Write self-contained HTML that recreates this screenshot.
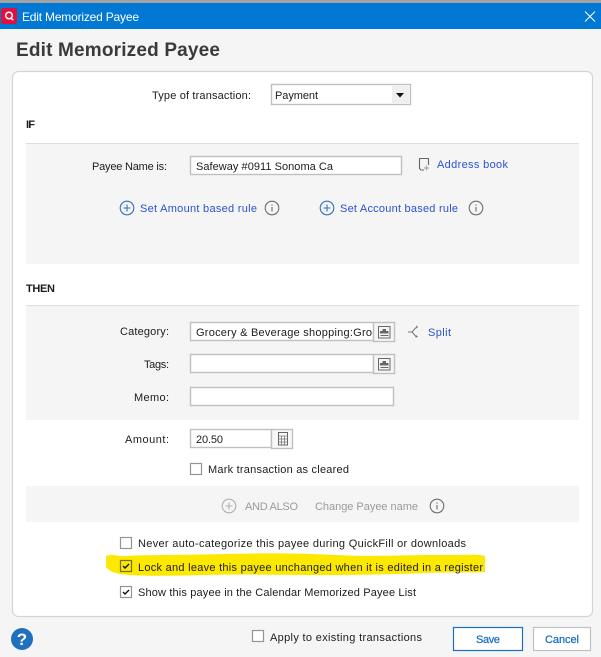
<!DOCTYPE html>
<html><head><meta charset="utf-8"><title>Edit Memorized Payee</title>
<style>
html,body{margin:0;padding:0;background:#f5f5f5;width:601px;height:657px;overflow:hidden}
svg{display:block}
text{font-family:"Liberation Sans",sans-serif;font-size:11px;fill:#1c1c1c}
.l{fill:#2a52d0}
.g{fill:#9a9a9a}
.b{font-weight:bold}
.box{fill:#fff;stroke:#c0c0c0;stroke-width:1.4}
.cb{fill:#fff;stroke:#959595;stroke-width:1.2}
.ck{fill:none;stroke:#111;stroke-width:1.4}
.ci{fill:none;stroke:#2f72bf;stroke-width:1.1}
.cg{fill:none;stroke:#b0b0b0;stroke-width:1.1}
.ii{fill:none;stroke:#6e6e6e;stroke-width:1.1}
.bt{fill:#1b6fbf;font-size:11px;stroke:#1b6fbf;stroke-width:.25}
</style></head><body>
<svg width="601" height="657" viewBox="0 0 601 657" xmlns="http://www.w3.org/2000/svg">
<rect width="601" height="657" fill="#f5f5f5"/>
<rect width="601" height="3" fill="#a3a3a3"/>
<rect y="3" width="601" height="26" fill="#0178d4"/>
<rect x="1" y="8" width="16" height="16" rx="2.500" fill="#e2103e"/>
<circle cx="9" cy="15.500" r="3.300" fill="none" stroke="#fff" stroke-width="1.500"/>
<path d="M10.500 18l2.800 2" stroke="#fff" stroke-width="1.500"/>
<text x="22" y="21" textLength="117" lengthAdjust="spacing" style="fill:#fff;font-size:12px">Edit Memorized Payee</text>
<path d="M585 11.500l10 10M595 11.500l-10 10" stroke="#fff" stroke-width="1" fill="none"/>
<text x="16" y="56" textLength="204" lengthAdjust="spacing" class="b" style="font-size:19px;fill:#3a3a3a">Edit Memorized Payee</text>

<rect x="12.500" y="71.500" width="580" height="545" rx="6" fill="#fff" stroke="#d4d4d4" stroke-width="1.200"/>

<text x="152" y="99" textLength="99" lengthAdjust="spacing">Type of transaction:</text>
<rect x="271.500" y="84.500" width="139" height="20" class="box"/>
<rect x="392" y="86" width="17" height="17" fill="#efefef"/>
<path d="M396 93h8l-4 4.500z" fill="#111"/>
<text x="275" y="99" textLength="43" lengthAdjust="spacing">Payment</text>

<text x="26" y="128" textLength="9" lengthAdjust="spacing" class="b">IF</text>
<rect x="26" y="143" width="553" height="121" fill="#f5f5f5"/>
<rect x="26" y="143" width="553" height="1" fill="#dedede"/>
<text x="92" y="170" textLength="75" lengthAdjust="spacing">Payee Name is:</text>
<rect x="190.500" y="156.500" width="211" height="18" class="box"/>
<text x="196" y="170" textLength="137" lengthAdjust="spacing">Safeway #0911 Sonoma Ca</text>
<path d="M428.500 165v-6.500h-9v10l1.500 1.500h3" fill="none" stroke="#666" stroke-width="1.100"/>
<path d="M426.500 165.500v5M424 168h5" stroke="#aaa" stroke-width="1.200"/>
<text x="437" y="168" textLength="71" lengthAdjust="spacing" class="l">Address book</text>

<circle cx="127" cy="208" r="6.800" class="ci"/><path d="M123.500 208h7M127 204.500v7" class="ci"/>
<text x="140" y="212" textLength="117" lengthAdjust="spacing" class="l">Set Amount based rule</text>
<circle cx="272" cy="208" r="6.800" class="ii"/><path d="M272 207v4.500M272 204.500v1.200" class="ii"/>
<circle cx="327" cy="208" r="6.800" class="ci"/><path d="M323.500 208h7M327 204.500v7" class="ci"/>
<text x="340" y="212" textLength="118" lengthAdjust="spacing" class="l">Set Account based rule</text>
<circle cx="476" cy="208" r="6.800" class="ii"/><path d="M476 207v4.500M476 204.500v1.200" class="ii"/>

<text x="26" y="292" textLength="29" lengthAdjust="spacing" class="b">THEN</text>
<rect x="26" y="305" width="553" height="115" fill="#f5f5f5"/>
<rect x="26" y="305" width="553" height="1" fill="#dedede"/>

<text x="120" y="335" textLength="49" lengthAdjust="spacing">Category:</text>
<rect x="190.500" y="322.500" width="183" height="18" class="box"/>
<text x="196" y="336" textLength="176" lengthAdjust="spacing">Grocery &amp; Beverage shopping:Gro</text>
<rect x="373.500" y="322.500" width="21" height="19" fill="#f5f5f5" stroke="#c0c0c0" stroke-width="1.400"/>
<rect x="378.500" y="326.500" width="11.500" height="11.500" fill="none" stroke="#666"/>
<path d="M382.500 329h3.500v2h2.500v2.500h-8.500v-2.500h2.500z" fill="#666"/>
<path d="M380.500 335.500h8" stroke="#666" stroke-width="1"/>
<path d="M408 332h4l4-4.500M412 332l4 4.500" fill="none" stroke="#777" stroke-width="1"/>
<path d="M416 325.500l2 1.500-1.500 1.500zM416 335l2 2-2.500.5z" fill="#666"/>
<text x="428" y="336" textLength="23" lengthAdjust="spacing" class="l">Split</text>

<text x="144" y="368" textLength="25" lengthAdjust="spacing">Tags:</text>
<rect x="190.500" y="354.500" width="183" height="18" class="box"/>
<rect x="373.500" y="354.500" width="21" height="19" fill="#f5f5f5" stroke="#c0c0c0" stroke-width="1.400"/>
<rect x="378.500" y="358.500" width="11.500" height="11.500" fill="none" stroke="#666"/>
<path d="M382.500 361h3.500v2h2.500v2.500h-8.500v-2.500h2.500z" fill="#666"/>
<path d="M380.500 367.500h8" stroke="#666" stroke-width="1"/>

<text x="134" y="401" textLength="35" lengthAdjust="spacing">Memo:</text>
<rect x="190.500" y="387.500" width="203" height="18" class="box"/>

<text x="125" y="443" textLength="44" lengthAdjust="spacing">Amount:</text>
<rect x="190.500" y="429.500" width="81" height="18" class="box"/>
<text x="196" y="443" textLength="27" lengthAdjust="spacing">20.50</text>
<rect x="271.500" y="429.500" width="21" height="19" fill="#f8f8f8" stroke="#c0c0c0" stroke-width="1.400"/>
<rect x="278.500" y="432.500" width="9" height="12.500" fill="none" stroke="#666"/>
<path d="M278.500 436h9M278.500 439h9M278.500 442h9M281.500 436v9M284.500 436v9" stroke="#777" stroke-width=".8" fill="none"/>
<rect x="190.500" y="463.500" width="11" height="11" class="cb"/>
<text x="208" y="473" textLength="141" lengthAdjust="spacing">Mark transaction as cleared</text>

<rect x="26" y="486" width="553" height="36" fill="#f5f5f5"/>
<circle cx="229" cy="506" r="6.800" class="cg"/><path d="M225.500 506h7M229 502.500v7" class="cg"/>
<text x="245" y="510" textLength="53" lengthAdjust="spacing" class="g">AND ALSO</text>
<text x="315" y="510" textLength="103" lengthAdjust="spacing" class="g">Change Payee name</text>
<circle cx="437" cy="506" r="6.800" class="ii"/><path d="M437 505v4.500M437 502.500v1.200" class="ii"/>

<path d="M106 556c8-3 10 1 20 0s60-1 100-2 70-1 110 1 60 0 100 0 40-1 49 1v16c-8 1-40 0-60 1s-60 2-100 2-80-1-120 0-60 1-75 0-20-3-24-8z" fill="#fde800"/>

<rect x="120.500" y="537.500" width="11" height="11" class="cb"/>
<text x="138" y="547" textLength="328" lengthAdjust="spacing">Never auto-categorize this payee during QuickFill or downloads</text>
<rect x="120.500" y="560.500" width="11" height="11" fill="#fde800" stroke="#77701a" stroke-width="1.200"/>
<path d="M123 566l2 2 4-4" class="ck"/>
<text x="138" y="571" textLength="345" lengthAdjust="spacing">Lock and leave this payee unchanged when it is edited in a register</text>
<rect x="120.500" y="586.500" width="11" height="11" class="cb"/>
<path d="M123 592l2 2 4-4" class="ck"/>
<text x="138" y="596" textLength="278" lengthAdjust="spacing">Show this payee in the Calendar Memorized Payee List</text>

<circle cx="22" cy="639" r="11" fill="#1f70bf"/>
<text x="22" y="645" text-anchor="middle" class="b" style="fill:#fff;font-size:17px">?</text>
<rect x="252.500" y="630.500" width="11" height="11" class="cb"/>
<text x="270" y="641" textLength="152" lengthAdjust="spacing">Apply to existing transactions</text>
<rect x="453.500" y="627.500" width="69" height="23" fill="#fff" stroke="#1b6fbf" stroke-width="1.200"/>
<text x="476" y="643" textLength="24" lengthAdjust="spacing" class="bt">Save</text>
<rect x="533.500" y="627.500" width="57" height="23" fill="#fff" stroke="#c0c0c0" stroke-width="1.200"/>
<text x="545" y="643" textLength="34" lengthAdjust="spacing" class="bt">Cancel</text>
</svg>
</body></html>
